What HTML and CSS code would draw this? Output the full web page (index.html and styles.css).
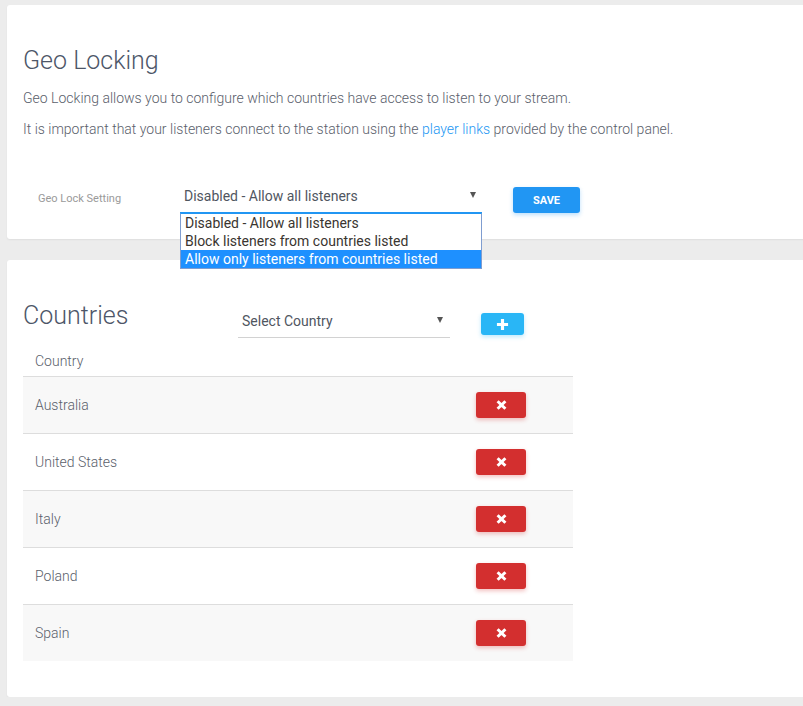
FILE: index.html
```html
<!DOCTYPE html>
<html>
<head>
<meta charset="utf-8">
<title>Geo Locking</title>
<link rel="stylesheet" href="styles.css">
</head>
<body>
<div class="page">
  <section class="card card-settings">
    <h2 class="title">Geo Locking</h2>
    <p class="text">Geo Locking allows you to configure which countries have access to listen to your stream.</p>
    <p class="text">It is important that your listeners connect to the station using the <a class="link" href="#">player links</a> provided by the control panel.</p>
    <div class="setting-row">
      <label class="setting-label">Geo Lock Setting</label>
      <div class="select-wrap">
        <div class="select select-focused">
          <span class="select-value">Disabled - Allow all listeners</span>
          <span class="caret"></span>
        </div>
        <ul class="listbox">
          <li class="option">Disabled - Allow all listeners</li>
          <li class="option">Block listeners from countries listed</li>
          <li class="option option-active">Allow only listeners from countries listed</li>
        </ul>
      </div>
      <button class="btn btn-save">SAVE</button>
    </div>
  </section>

  <section class="card card-countries">
    <div class="countries-head">
      <h2 class="title title-countries">Countries</h2>
      <div class="select select-country">
        <span class="select-value">Select Country</span>
        <span class="caret caret-country"></span>
      </div>
      <button class="btn btn-add" aria-label="Add">
        <svg width="13" height="13" viewBox="0 0 14 14"><path d="M7 1v12M1 7h12" stroke="#fff" stroke-width="3.4" fill="none"/></svg>
      </button>
    </div>
    <table class="table">
      <thead>
        <tr><th class="th">Country</th><th class="th th-action"></th></tr>
      </thead>
      <tbody>
        <tr class="row row-odd"><td class="cell">Australia</td><td class="cell cell-action"><button class="btn btn-remove" aria-label="Remove"><svg width="11" height="10" viewBox="0 0 11 10"><path d="M1.6 1.2L9.4 8.8M9.4 1.2L1.6 8.8" stroke="#fff" stroke-width="3" fill="none"/></svg></button></td></tr>
        <tr class="row"><td class="cell">United States</td><td class="cell cell-action"><button class="btn btn-remove" aria-label="Remove"><svg width="11" height="10" viewBox="0 0 11 10"><path d="M1.6 1.2L9.4 8.8M9.4 1.2L1.6 8.8" stroke="#fff" stroke-width="3" fill="none"/></svg></button></td></tr>
        <tr class="row row-odd"><td class="cell">Italy</td><td class="cell cell-action"><button class="btn btn-remove" aria-label="Remove"><svg width="11" height="10" viewBox="0 0 11 10"><path d="M1.6 1.2L9.4 8.8M9.4 1.2L1.6 8.8" stroke="#fff" stroke-width="3" fill="none"/></svg></button></td></tr>
        <tr class="row"><td class="cell">Poland</td><td class="cell cell-action"><button class="btn btn-remove" aria-label="Remove"><svg width="11" height="10" viewBox="0 0 11 10"><path d="M1.6 1.2L9.4 8.8M9.4 1.2L1.6 8.8" stroke="#fff" stroke-width="3" fill="none"/></svg></button></td></tr>
        <tr class="row row-odd"><td class="cell">Spain</td><td class="cell cell-action"><button class="btn btn-remove" aria-label="Remove"><svg width="11" height="10" viewBox="0 0 11 10"><path d="M1.6 1.2L9.4 8.8M9.4 1.2L1.6 8.8" stroke="#fff" stroke-width="3" fill="none"/></svg></button></td></tr>
      </tbody>
    </table>
  </section>
</div>
</body>
</html>
```

FILE: styles.css
```css
* { box-sizing: border-box; }

html, body {
  margin: 0;
  padding: 0;
  background: #ececec;
  overflow: hidden;
}

body {
  font-family: Roboto, "Liberation Sans", Arial, sans-serif;
  font-size: 14px;
  font-weight: 300;
  line-height: 20px;
  color: #5f6570;
}

.page {
  padding: 5px 0 0 7px;
}

.card {
  background: #fff;
  border-radius: 3px;
  margin-right: -20px;
  box-shadow: 0 1px 2px rgba(0, 0, 0, 0.06);
  padding: 41px 0 0 16px;
}

.card-settings {
  padding-bottom: 25px;
  margin-bottom: 21px;
}

.card-countries {
  padding-bottom: 36px;
}

.title {
  margin: 0 0 12px;
  font-size: 25px;
  line-height: 30px;
  font-weight: 300;
  color: #4d5668;
}

.text {
  margin: 0 0 11px;
  font-size: 14px;
  font-weight: 300;
  line-height: 20px;
  color: #5a606b;
}

.link {
  color: #2196f3;
  text-decoration: none;
}

.setting-row {
  display: flex;
  align-items: flex-start;
  margin-top: 45px;
}

.setting-label {
  width: 157px;
  padding-left: 15px;
  margin-top: 7px;
  font-size: 11px;
  font-weight: 400;
  line-height: 16px;
  color: #9a9a9a;
}

.select-wrap {
  position: relative;
  width: 302px;
}

.select {
  position: relative;
  display: flex;
  align-items: center;
  height: 30px;
  padding: 2px 0 6px 4px;
  border-bottom: 1px solid #d2d2d2;
  color: #50565f;
  font-weight: 400;
}

.select-focused {
  border-bottom: 2px solid #2196f3;
}

.select-value {
  flex: 1;
  line-height: 20px;
}

.caret {
  width: 0;
  height: 0;
  border-left: 3px solid transparent;
  border-right: 3px solid transparent;
  border-top: 6px solid #555;
  margin-right: 6px;
  margin-top: -2px;
}

.listbox {
  position: absolute;
  top: 29px;
  left: 0;
  width: 302px;
  margin: 0;
  padding: 0;
  list-style: none;
  background: #fff;
  border: 1px solid #7f9dd0;
  border-top: 1px solid #2196f3;
  z-index: 5;
}

.option {
  height: 18px;
  line-height: 18px;
  padding-left: 4px;
  font-size: 14px;
  font-weight: 400;
  color: #3a3530;
  white-space: nowrap;
}

.option-active {
  background: #1e90ff;
  color: #fff;
}

.btn {
  border: 0;
  border-radius: 3px;
  display: flex;
  align-items: center;
  justify-content: center;
  padding: 0;
  cursor: pointer;
  font-family: Roboto, "Liberation Sans", Arial, sans-serif;
}

.btn-save {
  margin-left: 31px;
  margin-top: 3px;
  width: 67px;
  height: 26px;
  background: #2196f3;
  color: #fff;
  font-size: 11px;
  font-weight: 700;
  box-shadow: 0 2px 4px rgba(33, 150, 243, 0.3);
}

.countries-head {
  display: flex;
  align-items: flex-start;
}

.title-countries {
  width: 215px;
  margin: 0;
}

.select-country {
  width: 212px;
  margin-top: 5px;
  height: 32px;
  padding: 5px 0 6px 4px;
}

.caret-country {
  margin-right: 7px;
  margin-top: -3px;
}

.btn-add {
  margin-left: 31px;
  margin-top: 12px;
  width: 43px;
  height: 22px;
  background: #29b6f6;
  box-shadow: 0 2px 4px rgba(41, 182, 246, 0.3);
}

.table {
  margin-top: 2px;
  width: 550px;
  border-collapse: collapse;
}

.th {
  text-align: left;
  font-weight: 300;
  padding: 11px 12px 5px;
  line-height: 20px;
  color: #5a606b;
}

.th-action {
  width: 109px;
}

.row {
  border-top: 1px solid #dddddd;
  background: #fff;
}

.row-odd {
  background: #f8f8f8;
}

.cell {
  padding: 15px 12px;
  vertical-align: middle;
  line-height: 20px;
  color: #5a606b;
}

.cell-action {
  width: 109px;
}

.btn-remove {
  width: 50px;
  height: 26px;
  background: #d32f2f;
  box-shadow: 0 2px 4px rgba(211, 47, 47, 0.3);
}
```
